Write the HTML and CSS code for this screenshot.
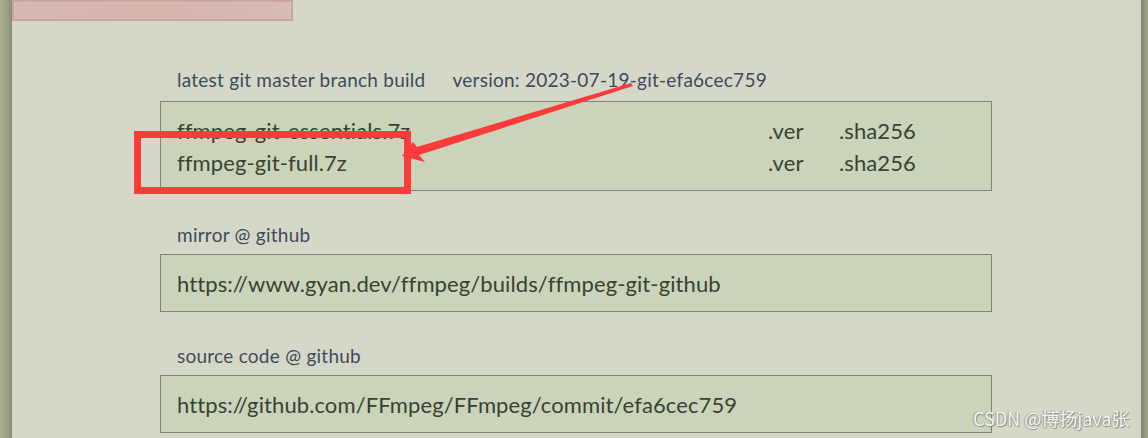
FILE: index.html
```html
<!DOCTYPE html>
<html lang="en">
<head>
    <meta charset="UTF-8">
    <meta name="viewport" content="width=device-width, initial-scale=1.0">
    <title>ffmpeg builds</title>
    <link rel="stylesheet" href="styles.css">
</head>
<body>
    <div class="frame">
        <div class="edge-left"></div>

        <div class="main">
            <div class="banner"></div>

            <div class="content">
                <div class="section">
                    <p class="label label-first">latest git master branch build<span class="version">version: 2023-07-19-git-efa6cec759</span></p>
                    <div class="box">
                        <div class="file-row">
                            <span class="file-name">ffmpeg-git-essentials.7z</span>
                            <span class="file-ver">.ver</span>
                            <span class="file-sha">.sha256</span>
                        </div>
                        <div class="file-row">
                            <span class="file-name">ffmpeg-git-full.7z</span>
                            <span class="file-ver">.ver</span>
                            <span class="file-sha">.sha256</span>
                        </div>
                    </div>
                </div>

                <div class="section">
                    <p class="label">mirror @ github</p>
                    <div class="box">
                        <div class="file-row">https://www.gyan.dev/ffmpeg/builds/ffmpeg-git-github</div>
                    </div>
                </div>

                <div class="section">
                    <p class="label">source code @ github</p>
                    <div class="box">
                        <div class="file-row">https://github.com/FFmpeg/FFmpeg/commit/efa6cec759</div>
                    </div>
                </div>
            </div>
        </div>

        <div class="edge-right"></div>
    </div>

    <!-- screenshot annotation drawn on top -->
    <svg class="markup" width="1148" height="438" viewBox="0 0 1148 438">
        <rect x="137.5" y="134.5" width="270" height="56" fill="none" stroke="#fd3b3b" stroke-width="7"/>
        <polygon fill="#fd3b3b" points="631,83 417,147 413,142 402,156 425,162 419,155 633,86"/>
    </svg>

    <div class="watermark">CSDN @博扬java张</div>
</body>
</html>
```

FILE: styles.css
```css
body {
    margin: 0;
    padding: 0;
    width: 1148px;
    height: 438px;
    overflow: hidden;
    position: relative;
    font-family: Lato, "Open Sans", sans-serif;
    background-color: #d5d8c9;
}

.frame {
    display: flex;
    height: 438px;
}

.edge-left {
    width: 12px;
    flex-shrink: 0;
    background: linear-gradient(to right, #a9ae91, #9ca286 60%, #878d74);
}

.edge-right {
    width: 7px;
    flex-shrink: 0;
    background: linear-gradient(to right, #7c826c, #8f9579 40%, #a3a88c);
}

.main {
    flex: 1;
}

.banner {
    width: 277px;
    height: 17px;
    border: 2px solid #c8a5a3;
    background: linear-gradient(to right, #d6b8b3, #d8b2ad 50%, #d6bbb7);
    box-shadow: inset 0 0 0 1px #d9bebb;
}

.content {
    width: 832px;
    margin-left: 148px;
    padding-top: 47px;
}

.section {
    margin-bottom: 32px;
}

.label {
    margin: 0 0 7px 17px;
    font-size: 19px;
    line-height: 24px;
    letter-spacing: 0.25px;
    color: #404b5a;
}

.label-first {
    margin-bottom: 9px;
}

.version {
    margin-left: 27px;
}

.box {
    border: 1px solid #7d8474;
    background-color: #c9d4ba;
    padding: 13px 16px 11px;
}

.file-row {
    display: grid;
    grid-template-columns: 591px 71px auto;
    font-size: 22px;
    line-height: 32px;
    letter-spacing: 0.1px;
    color: #3a4232;
}

.markup {
    position: absolute;
    left: 0;
    top: 0;
}

.watermark {
    position: absolute;
    left: 973px;
    top: 405px;
    font-family: "Noto Sans CJK SC", "DejaVu Sans", sans-serif;
    font-size: 18px;
    line-height: 26px;
    color: #f4f4f0;
    text-shadow: 1px 1px 1px #8a8c84, -1px 0 1px #9a9c94;
}
```
